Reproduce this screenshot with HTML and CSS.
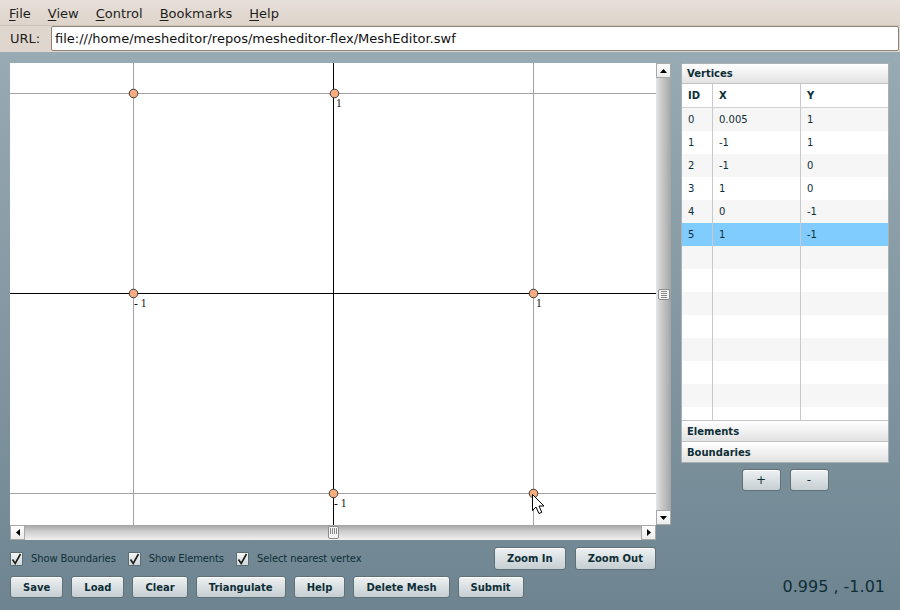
FILE: index.html
```html
<!DOCTYPE html>
<html>
<head>
<meta charset="utf-8">
<link rel="stylesheet" href="styles.css">
</head>
<body>
<div class="menubar">
  <span class="menu"><u>F</u>ile</span>
  <span class="menu"><u>V</u>iew</span>
  <span class="menu"><u>C</u>ontrol</span>
  <span class="menu"><u>B</u>ookmarks</span>
  <span class="menu"><u>H</u>elp</span>
</div>
<div class="urlbar">
  <span class="urllabel">URL:</span>
  <div class="urlinput">file:///home/mesheditor/repos/mesheditor-flex/MeshEditor.swf</div>
</div>
<div class="app">
  <div class="left">
    <div class="scroller">
      <div class="canvas">
        <svg width="646" height="462" viewBox="0 0 646 462">
          <g stroke="#a3a3a3" stroke-width="1">
            <line x1="123.5" y1="0" x2="123.5" y2="462"/>
            <line x1="523.5" y1="0" x2="523.5" y2="462"/>
            <line x1="0" y1="30.5" x2="646" y2="30.5"/>
            <line x1="0" y1="430.5" x2="646" y2="430.5"/>
          </g>
          <g stroke="#000" stroke-width="1">
            <line x1="323.5" y1="0" x2="323.5" y2="462"/>
            <line x1="0" y1="230.5" x2="646" y2="230.5"/>
          </g>
          <g fill="#f9ad7e" stroke="#3a3a3a" stroke-width="1">
            <circle cx="324.5" cy="30.5" r="4.3"/>
            <circle cx="123.5" cy="30.5" r="4.3"/>
            <circle cx="123.5" cy="230.5" r="4.3"/>
            <circle cx="523.5" cy="230.5" r="4.3"/>
            <circle cx="323.5" cy="430.5" r="4.3"/>
            <circle cx="523.5" cy="430.5" r="4.3"/>
          </g>
          <g class="ticks">
            <text x="326" y="44">1</text>
            <text x="124" y="244">- 1</text>
            <text x="526" y="244">1</text>
            <text x="324" y="444">- 1</text>
          </g>
          <path d="M522.5 431.5 L522.5 447.5 L526 444 L529 450.5 L531.8 449.3 L529 443 L534 443 Z" fill="#fff" stroke="#000" stroke-width="1" stroke-linejoin="miter"/>
        </svg>
      </div>
      <div class="vscroll">
        <div class="arrowbtn"><svg width="7" height="4"><path d="M0 4 L3.5 0 L7 4 Z" fill="#000"/></svg></div>
        <div class="vtrack"><div class="vthumb"><span></span><span></span><span></span><span></span></div></div>
        <div class="arrowbtn"><svg width="7" height="4"><path d="M0 0 L3.5 4 L7 0 Z" fill="#000"/></svg></div>
      </div>
      <div class="hscroll">
        <div class="arrowbtn"><svg width="4" height="7"><path d="M4 0 L0 3.5 L4 7 Z" fill="#000"/></svg></div>
        <div class="htrack"><div class="hthumb"><span></span><span></span><span></span><span></span></div></div>
        <div class="arrowbtn"><svg width="4" height="7"><path d="M0 0 L4 3.5 L0 7 Z" fill="#000"/></svg></div>
      </div>
      <div class="corner"></div>
    </div>
    <div class="opts">
      <label class="chk"><span class="box"><svg width="11" height="12" viewBox="0 0 11 12"><path d="M1.5 6.5 L4.2 10.5 L9.5 1" fill="none" stroke="#1a1a1a" stroke-width="1.6"/></svg></span>Show Boundaries</label>
      <label class="chk"><span class="box"><svg width="11" height="12" viewBox="0 0 11 12"><path d="M1.5 6.5 L4.2 10.5 L9.5 1" fill="none" stroke="#1a1a1a" stroke-width="1.6"/></svg></span>Show Elements</label>
      <label class="chk"><span class="box"><svg width="11" height="12" viewBox="0 0 11 12"><path d="M1.5 6.5 L4.2 10.5 L9.5 1" fill="none" stroke="#1a1a1a" stroke-width="1.6"/></svg></span>Select nearest vertex</label>
      <div class="spacer"></div>
      <button class="btn zbtn">Zoom In</button>
      <button class="btn zbtn">Zoom Out</button>
    </div>
    <div class="actions">
      <button class="btn">Save</button>
      <button class="btn">Load</button>
      <button class="btn">Clear</button>
      <button class="btn">Triangulate</button>
      <button class="btn">Help</button>
      <button class="btn">Delete Mesh</button>
      <button class="btn">Submit</button>
    </div>
  </div>
  <div class="right">
    <div class="acc">
      <div class="acchead">Vertices</div>
      <div class="table">
        <div class="row thead"><div>ID</div><div>X</div><div>Y</div></div>
        <div class="row alt"><div>0</div><div>0.005</div><div>1</div></div>
        <div class="row"><div>1</div><div>-1</div><div>1</div></div>
        <div class="row alt"><div>2</div><div>-1</div><div>0</div></div>
        <div class="row"><div>3</div><div>1</div><div>0</div></div>
        <div class="row alt"><div>4</div><div>0</div><div>-1</div></div>
        <div class="row sel"><div>5</div><div>1</div><div>-1</div></div>
        <div class="row alt"><div></div><div></div><div></div></div>
        <div class="row"><div></div><div></div><div></div></div>
        <div class="row alt"><div></div><div></div><div></div></div>
        <div class="row"><div></div><div></div><div></div></div>
        <div class="row alt"><div></div><div></div><div></div></div>
        <div class="row"><div></div><div></div><div></div></div>
        <div class="row alt"><div></div><div></div><div></div></div>
        <div class="row last"><div></div><div></div><div></div></div>
      </div>
      <div class="acchead sub">Elements</div>
      <div class="acchead sub">Boundaries</div>
    </div>
    <div class="pm">
      <button class="btn pmbtn">+</button>
      <button class="btn pmbtn">-</button>
    </div>
    <div class="status">0.995 , -1.01</div>
  </div>
</div>
</body>
</html>
```

FILE: styles.css
```css
html, body {
  margin: 0;
  padding: 0;
}
body {
  width: 900px;
  height: 610px;
  overflow: hidden;
  font-family: "DejaVu Sans", sans-serif;
  background: #6f8590;
}
.menubar {
  height: 25px;
  display: flex;
  align-items: center;
  gap: 17px;
  padding-left: 9px;
  font-size: 13px;
  color: #1e1e1e;
  background: linear-gradient(#e7e0d9, #ddd3ca);
  box-sizing: border-box;
  padding-top: 1px;
}
.menu u {
  text-decoration-thickness: 1px;
  text-underline-offset: 2px;
}
.urlbar {
  height: 27px;
  display: flex;
  align-items: center;
  background: #dfd6ce;
  box-sizing: border-box;
  border-top: 1px solid #cdc3b9;
  padding: 0 1px 1px 10px;
}
.urllabel {
  font-size: 13px;
  color: #1e1e1e;
  width: 41px;
}
.urlinput {
  flex: 1;
  height: 25px;
  box-sizing: border-box;
  border: 1px solid #8f8376;
  border-radius: 2px;
  background: #fff;
  font-size: 13px;
  color: #111;
  line-height: 23px;
  padding-left: 3px;
}
.app {
  height: 558px;
  box-sizing: border-box;
  background: linear-gradient(#98aab3, #6e8591);
  display: flex;
  padding: 11px 0 0 10px;
  gap: 10px;
}
.left {
  width: 661px;
  display: flex;
  flex-direction: column;
}
.scroller {
  display: grid;
  grid-template-columns: 646px 15px;
  grid-template-rows: 462px 15px;
}
.canvas {
  background: #fff;
  overflow: hidden;
}
.canvas svg {
  display: block;
}
.ticks text {
  font-family: "Liberation Serif", serif;
  font-size: 11.5px;
  fill: #111;
}
.vscroll {
  display: flex;
  flex-direction: column;
  background: linear-gradient(to right, #e6e6e6, #d2d2d2 25%, #a5a5a5 100%);
}
.hscroll {
  display: flex;
  background: linear-gradient(#a4a4a4, #cfcfcf 45%, #f0f0f0);
}
.arrowbtn {
  width: 15px;
  height: 15px;
  box-sizing: border-box;
  border: 1px solid #a9a9a9;
  background: linear-gradient(#ffffff, #ececec);
  display: flex;
  align-items: center;
  justify-content: center;
}
.arrowbtn svg {
  display: block;
}
.vtrack {
  flex: 1;
  display: flex;
  align-items: center;
  justify-content: center;
}
.vthumb {
  width: 12px;
  height: 11px;
  box-sizing: border-box;
  border: 1px solid #8c8c8c;
  border-radius: 2px;
  background: #f4f4f4;
  display: flex;
  flex-direction: column;
  justify-content: center;
  gap: 1px;
  padding: 0 2px;
}
.vthumb span {
  height: 1px;
  background: #888;
}
.htrack {
  flex: 1;
  display: flex;
  align-items: center;
  justify-content: center;
}
.hthumb {
  width: 11px;
  height: 13px;
  box-sizing: border-box;
  border: 1px solid #8c8c8c;
  border-radius: 2px;
  background: #f4f4f4;
  display: flex;
  justify-content: center;
  gap: 1px;
  padding: 1px 0 4px;
}
.hthumb span {
  width: 1px;
  background: #888;
}
.corner {
  background: transparent;
}
.opts {
  display: flex;
  align-items: center;
  margin-top: 7px;
  height: 23px;
  padding-right: 15px;
}
.chk {
  display: flex;
  align-items: center;
  font-size: 10px;
  letter-spacing: -0.12px;
  color: #0f2f38;
  margin-right: 12px;
}
.box {
  width: 13px;
  height: 14px;
  box-sizing: border-box;
  border: 1px solid #5b6c72;
  border-radius: 1px;
  background: linear-gradient(#f4f6f6, #cfd7da);
  display: flex;
  align-items: center;
  justify-content: center;
  margin-right: 8px;
}
.box svg {
  display: block;
}
.spacer {
  flex: 1;
}
.btn {
  font-family: "DejaVu Sans", sans-serif;
  font-weight: bold;
  font-size: 10px;
  color: #0e2e37;
  height: 22px;
  padding: 0 12px;
  box-sizing: border-box;
  border: 1px solid #5f7077;
  border-radius: 3px;
  background: linear-gradient(#eef1f2, #c5ced2);
  box-shadow: inset 0 1px 0 #fff;
  margin: 0;
}
.zbtn {
  height: 23px;
  margin-left: 9px;
}
.actions {
  display: flex;
  gap: 8px;
  margin-top: 6px;
}
.right {
  width: 208px;
  display: flex;
  flex-direction: column;
}
.acc {
  border: 1px solid #a9b1b4;
  background: #fff;
}
.acchead {
  height: 20px;
  box-sizing: border-box;
  background: linear-gradient(#ffffff, #e2e2e2);
  border-bottom: 1px solid #c4c4c4;
  font-size: 10px;
  font-weight: bold;
  color: #0e2e37;
  display: flex;
  align-items: center;
  padding-left: 5px;
}
.acchead.sub {
  height: 21px;
  border-top: 1px solid #c4c4c4;
  border-bottom: 0;
}
.table {
  background: #fff;
}
.row {
  display: grid;
  grid-template-columns: 31px 88px 1fr;
  height: 23px;
  font-size: 10px;
  color: #0e2e37;
}
.row > div {
  display: flex;
  align-items: center;
  padding-left: 6px;
  border-right: 1px solid #c9c9c9;
}
.row > div:last-child {
  border-right: 0;
}
.thead {
  height: 24px;
  font-weight: bold;
  border-bottom: 1px solid #d0d0d0;
  box-sizing: border-box;
}
.row.alt {
  background: #f6f6f6;
}
.row.sel {
  background: #80ccff;
}
.row.last {
  height: 13px;
}
.pm {
  display: flex;
  justify-content: center;
  gap: 9px;
  margin-top: 6px;
}
.pmbtn {
  width: 39px;
  height: 22px;
  padding: 0;
  font-size: 12px;
  font-weight: normal;
}
.status {
  margin-top: auto;
  margin-bottom: 14px;
  text-align: right;
  padding-right: 4px;
  font-size: 16px;
  color: #0e2e37;
}
```
